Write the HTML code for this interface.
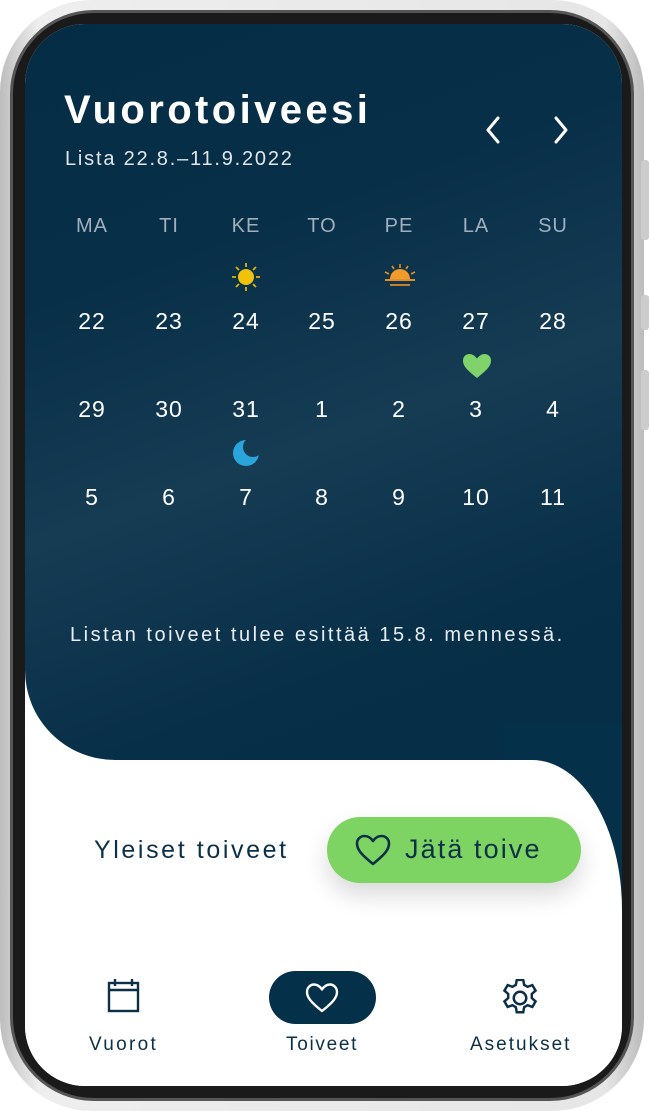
<!DOCTYPE html>
<html><head><meta charset="utf-8"><style>
*{margin:0;padding:0;box-sizing:border-box}
body{width:650px;height:1111px;background:#fff;font-family:"Liberation Sans",sans-serif;position:relative;overflow:hidden}
.frame{position:absolute;left:0;top:0;width:644px;height:1111px;border-radius:92px;background:linear-gradient(90deg,#bdbdbd,#eee 6%,#e6e6e6 94%,#bbb);}
.bezel{position:absolute;left:10px;top:10px;width:624px;height:1091px;border-radius:84px;background:#1a1a1a;border:3px solid #555}
.screen{position:absolute;left:25px;top:24px;width:597px;height:1062px;border-radius:60px;background:#fff;overflow:hidden}
.dark{position:absolute;left:0;top:0;width:597px;height:736px;border-bottom-left-radius:90px;background:linear-gradient(160deg,#042d45 0%,#082f48 30%,#163c54 55%,#072f47 80%,#052d45 100%)}
.rightdark{position:absolute;right:0;top:700px;width:120px;height:220px;background:#05304a}
.white{position:absolute;left:0;top:736px;width:597px;height:400px;background:#fff;border-top-right-radius:90px 150px}
.t{position:absolute;color:#fff}
.col{position:absolute;width:60px;text-align:center}
.hd{color:#9fb0bc;font-size:20px;top:215px;letter-spacing:1px}
.num{color:#fff;font-size:23px;letter-spacing:1px}
</style></head><body>
<div class="frame"></div>
<div style="position:absolute;left:641px;top:160px;width:8px;height:80px;background:#ccc;border-radius:3px"></div>
<div style="position:absolute;left:641px;top:295px;width:8px;height:35px;background:#ccc;border-radius:3px"></div>
<div style="position:absolute;left:641px;top:370px;width:8px;height:60px;background:#ccc;border-radius:3px"></div>
<div class="bezel"></div>
<div class="screen">
 <div class="dark"></div>
 <div class="rightdark"></div>
 <div class="white"></div>
</div>
<div class="t" style="left:64px;top:88px;font-size:40px;font-weight:bold;letter-spacing:3.4px">Vuorotoiveesi</div>
<div class="t" style="left:65px;top:148px;font-size:20px;color:#e0e6ea;letter-spacing:1.8px">Lista 22.8.–11.9.2022</div>
<svg style="position:absolute;left:480px;top:114px" width="100" height="32"><path d="M18 4 L8 16 L18 28" stroke="#fff" stroke-width="3" fill="none" stroke-linecap="round" stroke-linejoin="round"/><path d="M76 4 L86 16 L76 28" stroke="#fff" stroke-width="3" fill="none" stroke-linecap="round" stroke-linejoin="round"/></svg>
<div class="col hd" style="left:62px">MA</div>
<div class="col hd" style="left:139px">TI</div>
<div class="col hd" style="left:216px">KE</div>
<div class="col hd" style="left:292px">TO</div>
<div class="col hd" style="left:369px">PE</div>
<div class="col hd" style="left:446px">LA</div>
<div class="col hd" style="left:523px">SU</div>
<div class="col num" style="left:62px;top:308px">22</div><div class="col num" style="left:139px;top:308px">23</div><div class="col num" style="left:216px;top:308px">24</div><div class="col num" style="left:292px;top:308px">25</div><div class="col num" style="left:369px;top:308px">26</div><div class="col num" style="left:446px;top:308px">27</div><div class="col num" style="left:523px;top:308px">28</div>
<div class="col num" style="left:62px;top:396px">29</div><div class="col num" style="left:139px;top:396px">30</div><div class="col num" style="left:216px;top:396px">31</div><div class="col num" style="left:292px;top:396px">1</div><div class="col num" style="left:369px;top:396px">2</div><div class="col num" style="left:446px;top:396px">3</div><div class="col num" style="left:523px;top:396px">4</div>
<div class="col num" style="left:62px;top:484px">5</div><div class="col num" style="left:139px;top:484px">6</div><div class="col num" style="left:216px;top:484px">7</div><div class="col num" style="left:292px;top:484px">8</div><div class="col num" style="left:369px;top:484px">9</div><div class="col num" style="left:446px;top:484px">10</div><div class="col num" style="left:523px;top:484px">11</div>
<svg style="position:absolute;left:230px;top:261px" width="32" height="32"><circle cx="16" cy="16" r="8" fill="#f0c20a"/><g stroke="#e0b40a" stroke-width="1.8"><path d="M16 2v4M16 26v4M2 16h4M26 16h4M6 6l3 3M23 23l3 3M6 26l3-3M23 9l3-3"/></g></svg>
<svg style="position:absolute;left:383px;top:263px" width="34" height="26"><path d="M7 16a10 10 0 0 1 20 0z" fill="#f39a2c"/><path d="M2 17h30" stroke="#e38e2a" stroke-width="2"/><path d="M7 22h20" stroke="#c77d2a" stroke-width="2"/><g stroke="#e38e2a" stroke-width="1.6"><path d="M17 1v4M9 3l2 3M25 3l-2 3M2 9l4 2M32 9l-4 2"/></g></svg>
<svg style="position:absolute;left:462px;top:352px" width="30" height="28"><path d="M15 26C5 18 1 14 1 8.5 1 4.5 4 2 7.5 2 10.5 2 13 4 15 6.5 17 4 19.5 2 22.5 2 26 2 29 4.5 29 8.5 29 14 25 18 15 26z" fill="#7fd36a"/></svg>
<svg style="position:absolute;left:232px;top:440px" width="30" height="28"><defs><mask id="m"><rect width="30" height="28" fill="#fff"/><circle cx="21" cy="7" r="10" fill="#000"/></mask></defs><circle cx="14" cy="13" r="13" fill="#2aa5dc" mask="url(#m)"/></svg>
<div class="t" style="left:70px;top:624px;font-size:20px;color:#e8eef2;letter-spacing:2.5px">Listan toiveet tulee esittää 15.8. mennessä.</div>
<div style="position:absolute;left:94px;top:836px;font-size:25px;color:#0b3048;letter-spacing:2.6px">Yleiset toiveet</div>
<div style="position:absolute;left:327px;top:817px;width:254px;height:66px;border-radius:33px;background:#7ed463;box-shadow:0 12px 24px rgba(0,0,0,0.15)"></div>
<svg style="position:absolute;left:355px;top:833px" width="36" height="34"><path d="M18 31C7 22 2 17 2 10.5 2 6 5.5 3 9.5 3 13 3 16 5 18 8 20 5 23 3 26.5 3 30.5 3 34 6 34 10.5 34 17 29 22 18 31z" fill="none" stroke="#0b3048" stroke-width="2.6" stroke-linejoin="round"/></svg>
<div style="position:absolute;left:405px;top:834px;font-size:27px;color:#0b3048;letter-spacing:2.1px">Jätä toive</div>
<svg style="position:absolute;left:106px;top:978px" width="36" height="36"><rect x="3" y="5" width="29" height="28" fill="none" stroke="#0b3048" stroke-width="2.4"/><path d="M3 12h29M9 1v7M26 1v7" stroke="#0b3048" stroke-width="2.4"/></svg>
<div style="position:absolute;left:269px;top:971px;width:107px;height:53px;border-radius:27px;background:#05304a"></div>
<svg style="position:absolute;left:304px;top:982px" width="36" height="32"><path d="M18 29C8 21 3 16 3 10 3 5.5 6.5 2.5 10 2.5 13.5 2.5 16 4.5 18 7.5 20 4.5 22.5 2.5 26 2.5 29.5 2.5 33 5.5 33 10 33 16 28 21 18 29z" fill="none" stroke="#fff" stroke-width="2.4" stroke-linejoin="round"/></svg>
<svg style="position:absolute;left:501px;top:979px" width="38" height="38" viewBox="2 2 20 20"><path fill="none" stroke="#0b3048" stroke-width="1.3" d="M10.3 2.5h3.4l.5 2.6 1.8 1 2.5-.9 1.7 2.9-2 1.8v2.1l2 1.8-1.7 2.9-2.5-.9-1.8 1-.5 2.7h-3.4l-.5-2.7-1.8-1-2.5.9-1.7-2.9 2-1.8V9.9l-2-1.8 1.7-2.9 2.5.9 1.8-1z"/><circle cx="12" cy="12" r="3.3" fill="none" stroke="#0b3048" stroke-width="1.3"/></svg>
<div style="position:absolute;left:89px;top:1034px;font-size:19px;color:#0b3048;letter-spacing:2.3px">Vuorot</div>
<div style="position:absolute;left:286px;top:1034px;font-size:19px;color:#0b3048;letter-spacing:1.7px">Toiveet</div>
<div style="position:absolute;left:470px;top:1034px;font-size:19px;color:#0b3048;letter-spacing:2px">Asetukset</div>
</body></html>
